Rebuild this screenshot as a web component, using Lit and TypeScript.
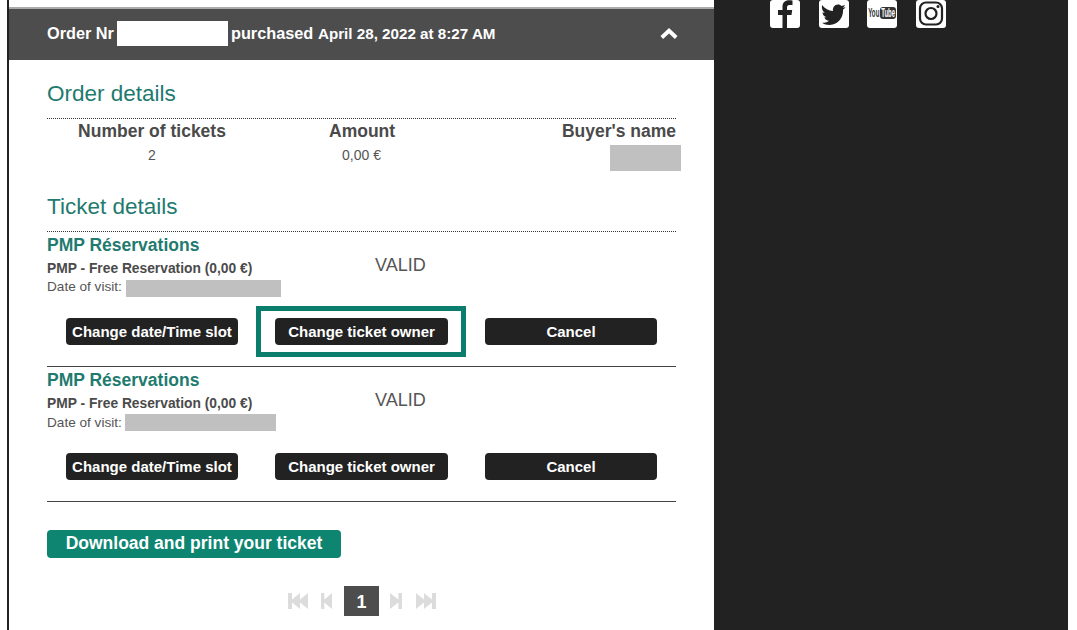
import { LitElement, html, css, svg } from "lit";
import { customElement } from "lit/decorators.js";

const ticket = (box: boolean, w: number) => html`
  <div class="ticket">
    <div class="info">
      <div class="meta">
        <div class="pname">PMP Réservations</div>
        <div class="free">PMP - Free Reservation (0,00 €)</div>
        <div class="date ${box ? "a" : "z"}">Date of visit: <span class="redact" style="width:${w}px"></span></div>
      </div>
      <div class="valid">VALID</div>
    </div>
    <div class="btns">
      <button class="b b1">Change date/Time slot</button>
      <div class="hl ${box ? "on" : ""}"><button class="b b2">Change ticket owner</button></div>
      <button class="b b3">Cancel</button>
    </div>
  </div>`;

const first = svg`<path d="M0 0h3v6l6-6v6l6-6v15l-6-6v6l-6-6v6H0z"/>`;
const prev = svg`<path d="M0 0h3v6l7-6v15l-7-6v6H0z"/>`;
const next = svg`<path d="M10 0H7v6L0 0v15l7-6v6h3z"/>`;
const last = svg`<path d="M15 0h-3v6L6 0v6L0 0v15l6-6v6l6-6v6h3z"/>`;

@customElement("app-root")
export class AppRoot extends LitElement {
  static styles = css`
    :host { display: block; width: 1077px; height: 630px; overflow: hidden; background: #fff;
      font-family: "Liberation Sans", Arial, sans-serif; color: #4a4a4a; }
    .page { display: flex; height: 630px; padding-left: 7px; padding-right: 9px; box-sizing: border-box; }
    .main { width: 707px; box-sizing: border-box; border-left: 2px solid #222; padding-top: 7px; flex: none; }
    .side { flex: 1; background: #222; display: flex; padding-left: 56px; align-items: flex-start; }
    .soc { width: 30px; height: 28px; background: #fff; border-radius: 3px; display: flex; flex: none; margin-right: 19px; }
    .soc.yt { margin-left: -1px; }
    .soc svg { display: block; }
    .head { border-top: 2px solid #aaa; background: #4d4d4d; height: 53px; box-sizing: border-box; display: flex;
      align-items: center; padding: 0 36px 2px 38px; color: #fff; font-weight: bold; font-size: 16.3px; }
    .head .oid { width: 111px; height: 25px; background: #fff; margin: 0 3px 0 3px; }
    .head .pur { width: 83px; white-space: nowrap; }
    .head .when { font-size: 15.2px; margin-left: 4px; }
    .head svg { margin-left: auto; }
    .body { padding: 0 38px; width: 629px; box-sizing: content-box; }
    h2 { margin: 0; padding-top: 1px; font-weight: normal; font-size: 22.5px; line-height: 28px; color: #1f7a6f; }
    .h1 { padding-top: 19px; }
    .dotted { border-bottom: 1px dotted #333; padding-bottom: 10px; }
    .cols { display: grid; grid-template-columns: 210px 210px 209px; height: 73px; }
    .cols > div { display: flex; flex-direction: column; }
    .th { font-weight: bold; font-size: 17.5px; line-height: 25px; }
    .td { font-size: 14px; line-height: 20px; color: #555; margin-top: 1px; }
    .c1 { align-items: center; }
    .c2 { align-items: flex-start; padding-left: 72px; }
    .c2 .td { padding-left: 13px; }
    .c3 { align-items: flex-end; }
    .redact { display: inline-block; background: #c0c0c0; }
    .buyer { width: 71px; height: 26px; background: #c0c0c0; margin-right: -5px; margin-top: 1px; }
    .ticket { border-bottom: 1px solid #444; height: 135px; box-sizing: border-box; }
    .info { display: flex; height: 73px; }
    .meta { width: 328px; flex: none; }
    .pname { font-size: 17.5px; font-weight: bold; color: #1f7a6f; line-height: 26px; }
    .free { font-size: 13.8px; font-weight: bold; line-height: 19px; margin-top: 1px; }
    .date { font-size: 13.6px; line-height: 20px; color: #555; display: flex; gap: 4px; height: 18px; white-space: nowrap; }
    .date.z { gap: 3px; }
    .date .redact { height: 17px; margin-top: 1px; }
    .date.a { margin-top: -1px; }
    .date.a .redact { margin-top: 3px; }
    .valid { font-size: 18px; line-height: 26px; color: #555; padding-top: 20px; }
    .btns { display: flex; align-items: center; height: 50px; padding-top: 2px; box-sizing: border-box; }
    .b { border: 0; background: #222; color: #fff; font: bold 15px "Liberation Sans", Arial, sans-serif; height: 27px;
      border-radius: 4px; padding: 0; display: block; }
    .b1 { width: 172px; margin-left: 19px; }
    .hl { border: 5px solid transparent; padding: 7px 13px 7px 14px; margin-left: 18px; flex: none; }
    .hl.on { border-color: #0b7d6c; }
    .b2 { width: 173px; }
    .b3 { width: 172px; margin-left: 19px; }
    .dl { margin-top: 28px; background: #0d8570; color: #fff; border: 0; border-radius: 4px; width: 294px; height: 28px;
      font: bold 17.5px "Liberation Sans", Arial, sans-serif; padding: 0 0 2px; display: block; }
    .pager { display: flex; align-items: center; margin-top: 28px; padding-left: 241px; height: 30px; }
    .pager svg { fill: #dcdcdc; display: block; }
    .pg { width: 35px; height: 30px; background: #4d4d4d; color: #fff; font-size: 18px; font-weight: bold; display: flex; align-items: center;
      justify-content: center; padding-top: 2px; box-sizing: border-box; }
    .gp1 { margin-right: 13px; }
    .gp2 { margin-right: 12px; }
    .gp3 { margin-left: 11px; }
    .gp4 { margin-left: 14px; }
  `;

  render() {
    return html`
      <div class="page">
        <div class="main">
          <div class="head">
            <span>Order Nr</span><span class="oid"></span><span class="pur">purchased</span><span class="when">April 28, 2022 at 8:27 AM</span>
            <svg width="18" height="12" viewBox="0 0 18 12" aria-hidden="true"><path d="M9 0l8.5 8-2.6 3L9 5.6 3.1 11 .5 8z" fill="#fff"/></svg>
          </div>
          <div class="body">
            <div class="h1 dotted"><h2>Order details</h2></div>
            <div class="cols">
              <div class="c1"><div class="th">Number of tickets</div><div class="td">2</div></div>
              <div class="c2"><div class="th">Amount</div><div class="td">0,00 €</div></div>
              <div class="c3"><div class="th">Buyer's name</div><div class="buyer"></div></div>
            </div>
            <div class="dotted"><h2>Ticket details</h2></div>
            ${ticket(true, 155)}
            ${ticket(false, 151)}
            <button class="dl">Download and print your ticket</button>
            <div class="pager">
              <svg class="gp1" width="20" height="16" viewBox="0 0 15 15" preserveAspectRatio="none">${first}</svg>
              <svg class="gp2" width="11" height="16" viewBox="0 0 10 15" preserveAspectRatio="none">${prev}</svg>
              <div class="pg">1</div>
              <svg class="gp3" width="12" height="16" viewBox="0 0 10 15" preserveAspectRatio="none">${next}</svg>
              <svg class="gp4" width="20" height="16" viewBox="0 0 15 15" preserveAspectRatio="none">${last}</svg>
            </div>
          </div>
        </div>
        <div class="side">
          <div class="soc"><svg width="30" height="28" viewBox="0 0 30 28"><path d="M17 28V15h4.500l.7-5H17V7.500c0-1.500.5-2.500 2.500-2.500H22.500V.5C22 .4 20.500.2 19 .2 15 .2 12.500 2.500 12.500 6.500V10H8v5h4.500v13z" fill="#222"/></svg></div>
          <div class="soc"><svg width="30" height="28" viewBox="0 0 30 28"><path d="M3 5c3 3.800 6.500 5.800 11 6-.6-3.200 1.500-6.500 5-6.500 1.500 0 2.800.6 3.700 1.600 1.200-.2 2.300-.7 3.300-1.300-.4 1.300-1.200 2.300-2.300 3 1-.1 2-.4 2.900-.8-.7 1-1.500 1.900-2.500 2.600C24.500 17 19.500 25 10.500 25c-2.900 0-5.400-.8-7.500-2.200 2.500.3 5-.4 7-2-2.200 0-4-1.500-4.600-3.500.7.100 1.500.1 2.200-.1C5.200 16.700 3.500 14.700 3.500 12.200c.7.400 1.400.6 2.200.6C3.300 11.300 2.500 7.800 3 5z" fill="#222"/></svg></div>
          <div class="soc yt"><svg width="30" height="28" viewBox="0 0 30 28"><rect x="13" y="7" width="16" height="12" rx="3" fill="#333"/><text transform="translate(1.200 17.200) scale(.62 1.35)" font-size="10" font-weight="bold" font-family="Liberation Sans" fill="#333">You</text><text transform="translate(14.200 17.200) scale(.6 1.35)" font-size="10" font-weight="bold" font-family="Liberation Sans" fill="#fff">Tube</text></svg></div>
          <div class="soc"><svg width="30" height="28" viewBox="0 0 30 28" fill="none" stroke="#222"><rect x="4" y="2.500" width="22" height="22" rx="6" stroke-width="2.200"/><circle cx="15" cy="13.500" r="5.500" stroke-width="2.200"/><circle cx="22" cy="6.500" r="1.500" fill="#222" stroke="none"/></svg></div>
        </div>
      </div>`;
  }
}
